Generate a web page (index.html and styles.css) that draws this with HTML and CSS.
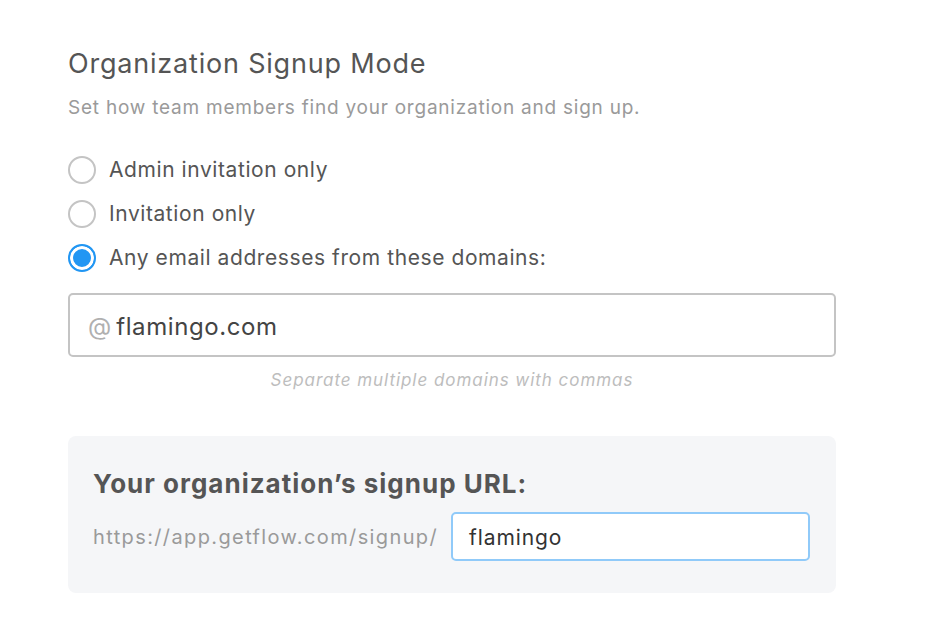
FILE: index.html
```html
<!DOCTYPE html>
<html>
<head>
<meta charset="utf-8">
<link rel="stylesheet" href="styles.css">
</head>
<body>
<div class="page">
  <h1 class="title">Organization Signup Mode</h1>
  <p class="subtitle">Set how team members find your organization and sign up.</p>
  <div class="options">
    <label class="option"><span class="radio"></span><span>Admin invitation only</span></label>
    <label class="option"><span class="radio"></span><span>Invitation only</span></label>
    <label class="option"><span class="radio checked"></span><span>Any email addresses from these domains:</span></label>
  </div>
  <div class="domain-input">
    <span class="at">@</span><span class="domain">flamingo.com</span>
  </div>
  <p class="help">Separate multiple domains with commas</p>
  <div class="url-box">
    <h2 class="url-title">Your organization’s signup URL:</h2>
    <div class="url-row">
      <span class="url-prefix">https://app.getflow.com/signup/</span>
      <div class="slug-input">flamingo</div>
    </div>
  </div>
</div>
</body>
</html>
```
FILE: styles.css
```css
html, body {
  margin: 0;
  padding: 0;
  background: #ffffff;
}
body {
  font-family: Inter, "Noto Sans", sans-serif;
  color: #555555;
}
.page {
  width: 768px;
  padding: 44px 0 0 68px;
}
.title {
  margin: 0;
  font-size: 27px;
  font-weight: 400;
  line-height: 40px;
  letter-spacing: 0.8px;
  color: #555555;
}
.subtitle {
  margin: 12px 0 0;
  font-size: 19px;
  line-height: 24px;
  letter-spacing: 0.77px;
  color: #9a9a9a;
}
.options {
  margin-top: 35px;
  display: flex;
  flex-direction: column;
  gap: 14px;
}
.option {
  display: flex;
  align-items: center;
  gap: 13px;
  font-size: 21px;
  line-height: 30px;
  letter-spacing: 0.58px;
  color: #555555;
}
.radio {
  width: 28px;
  height: 28px;
  box-sizing: border-box;
  border: 2px solid #c4c4c4;
  border-radius: 50%;
  background: #fff;
  flex: none;
}
.radio.checked {
  border: 2px solid #2196f3;
  background: #2196f3;
  box-shadow: inset 0 0 0 3px #fff;
}
.domain-input {
  margin-top: 20px;
  height: 64px;
  box-sizing: border-box;
  border: 2px solid #c4c4c4;
  border-radius: 5px;
  display: flex;
  align-items: center;
  padding: 3px 0 0 18px;
  font-size: 24px;
  letter-spacing: 0.6px;
}
.at {
  color: #b0b0b0;
  margin-right: 5px;
  letter-spacing: 0;
}
.domain {
  color: #444444;
}
.help {
  margin: 11px 0 0;
  text-align: center;
  font-style: italic;
  font-size: 17px;
  line-height: 24px;
  letter-spacing: 0.95px;
  color: #bdbdbd;
}
.url-box {
  margin-top: 44px;
  height: 157px;
  box-sizing: border-box;
  background: #f5f6f8;
  border-radius: 8px;
  padding: 30px 26px 0 25px;
}
.url-title {
  margin: 0;
  font-size: 26px;
  font-weight: 700;
  line-height: 36px;
  letter-spacing: 1px;
  color: #555555;
}
.url-row {
  margin-top: 10px;
  display: flex;
  align-items: center;
  gap: 13px;
}
.url-prefix {
  font-size: 20px;
  letter-spacing: 1.38px;
  color: #9a9a9a;
}
.slug-input {
  flex: 1;
  height: 49px;
  box-sizing: border-box;
  border: 2px solid #90caf9;
  border-radius: 5px;
  background: #fff;
  display: flex;
  align-items: center;
  padding: 2px 0 0 16px;
  font-size: 21px;
  letter-spacing: 0.9px;
  color: #333333;
}
```
